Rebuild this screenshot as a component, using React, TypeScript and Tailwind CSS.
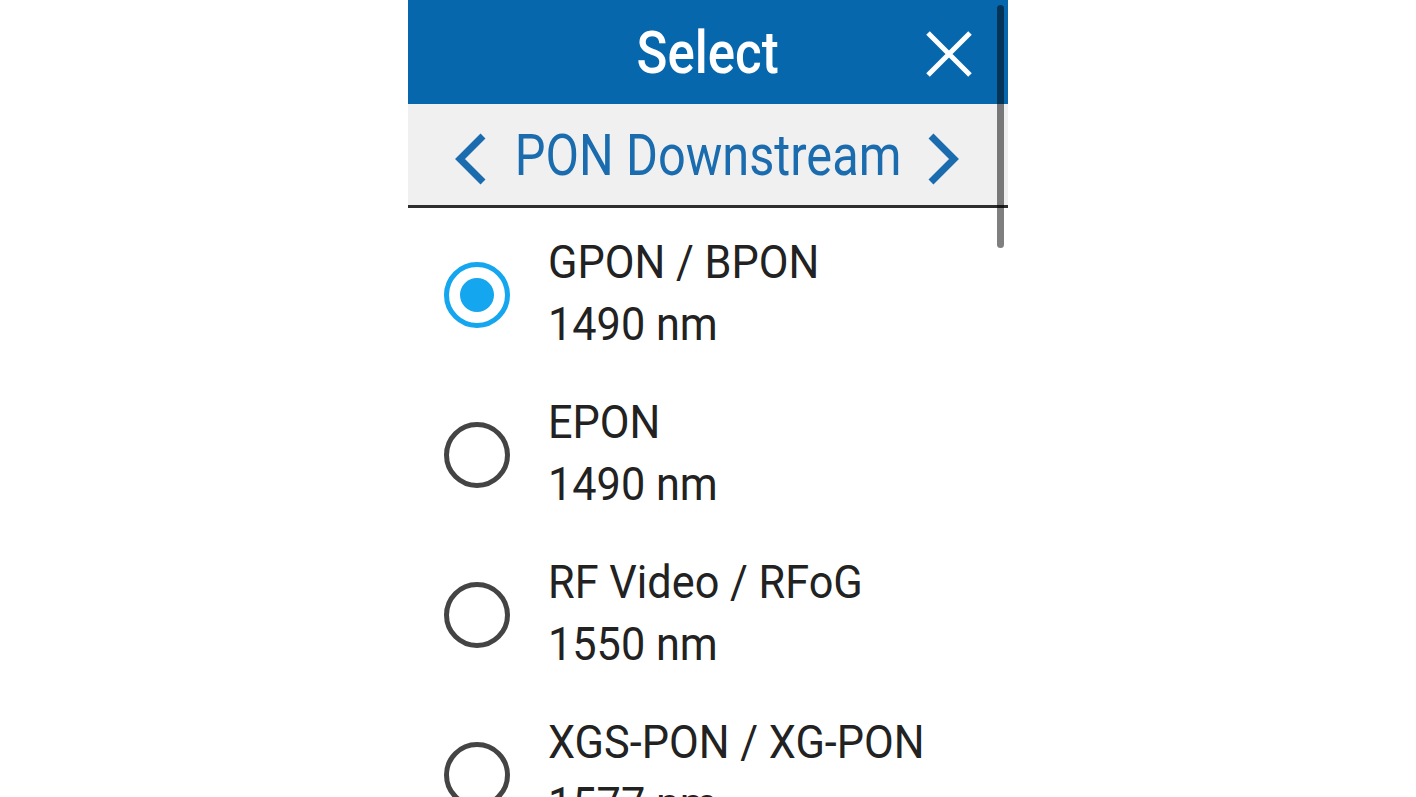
const options = [
  { name: "GPON / BPON", wave: "1490 nm" },
  { name: "EPON", wave: "1490 nm" },
  { name: "RF Video / RFoG", wave: "1550 nm" },
  { name: "XGS-PON / XG-PON", wave: "1577 nm" },
];

const App = () => {
  const selected = 0;
  return (
    <div className="w-[1416px] h-[797px] bg-white overflow-hidden font-['Roboto',sans-serif]">
      <div className="relative ml-[408px] w-[600px] h-[797px]">
        {/* Header */}
        <div className="relative flex items-center justify-center h-[104px] bg-[#0767ad] text-white">
          <span className="text-[60px] font-medium leading-none scale-x-[0.85] mt-[2px]">
            Select
          </span>
          <svg
            className="absolute left-[517px] top-[31px]"
            width="48"
            height="46"
            viewBox="0 0 48 46"
            fill="none"
            stroke="currentColor"
            strokeWidth="5"
          >
            <path d="M3 2 L45 44 M45 2 L3 44" />
          </svg>
        </div>

        {/* Category switcher */}
        <div className="relative flex items-center justify-center h-[104px] bg-[#f0f0f0] border-b-[3px] border-[#2e2e2e] text-[#1a6cae]">
          <svg
            className="absolute left-[42px] top-[29px]"
            width="38"
            height="52"
            viewBox="0 0 38 52"
            fill="none"
            stroke="currentColor"
            strokeWidth="7"
          >
            <path d="M33 3 L10 26 L33 49" />
          </svg>
          <span className="text-[58px] leading-none scale-x-[0.84]">
            PON Downstream
          </span>
          <svg
            className="absolute left-[518px] top-[29px]"
            width="38"
            height="52"
            viewBox="0 0 38 52"
            fill="none"
            stroke="currentColor"
            strokeWidth="7"
          >
            <path d="M5 3 L28 26 L5 49" />
          </svg>
        </div>

        {/* Options */}
        <div className="flex flex-col pt-[7px]">
          {options.map((opt, index) => (
            <div key={opt.name} className="flex items-center h-[160px] pl-[36px]">
              {index === selected ? (
                <div className="flex items-center justify-center w-[66px] h-[66px] rounded-full border-[5px] border-[#14a6ee]">
                  <div className="w-[34px] h-[34px] rounded-full bg-[#14a6ee]" />
                </div>
              ) : (
                <div className="w-[66px] h-[66px] rounded-full border-[5px] border-[#444]" />
              )}
              <div className="flex flex-col ml-[38px] mt-[-5px] text-[#222] text-[47px] leading-[62px] origin-left scale-x-[0.92]">
                <span>{opt.name}</span>
                <span>{opt.wave}</span>
              </div>
            </div>
          ))}
        </div>

        {/* Scrollbar thumb */}
        <div className="absolute left-[589px] top-[5px] w-[7px] h-[243px] rounded-full bg-black/50" />
      </div>
    </div>
  );
};

export default App;
